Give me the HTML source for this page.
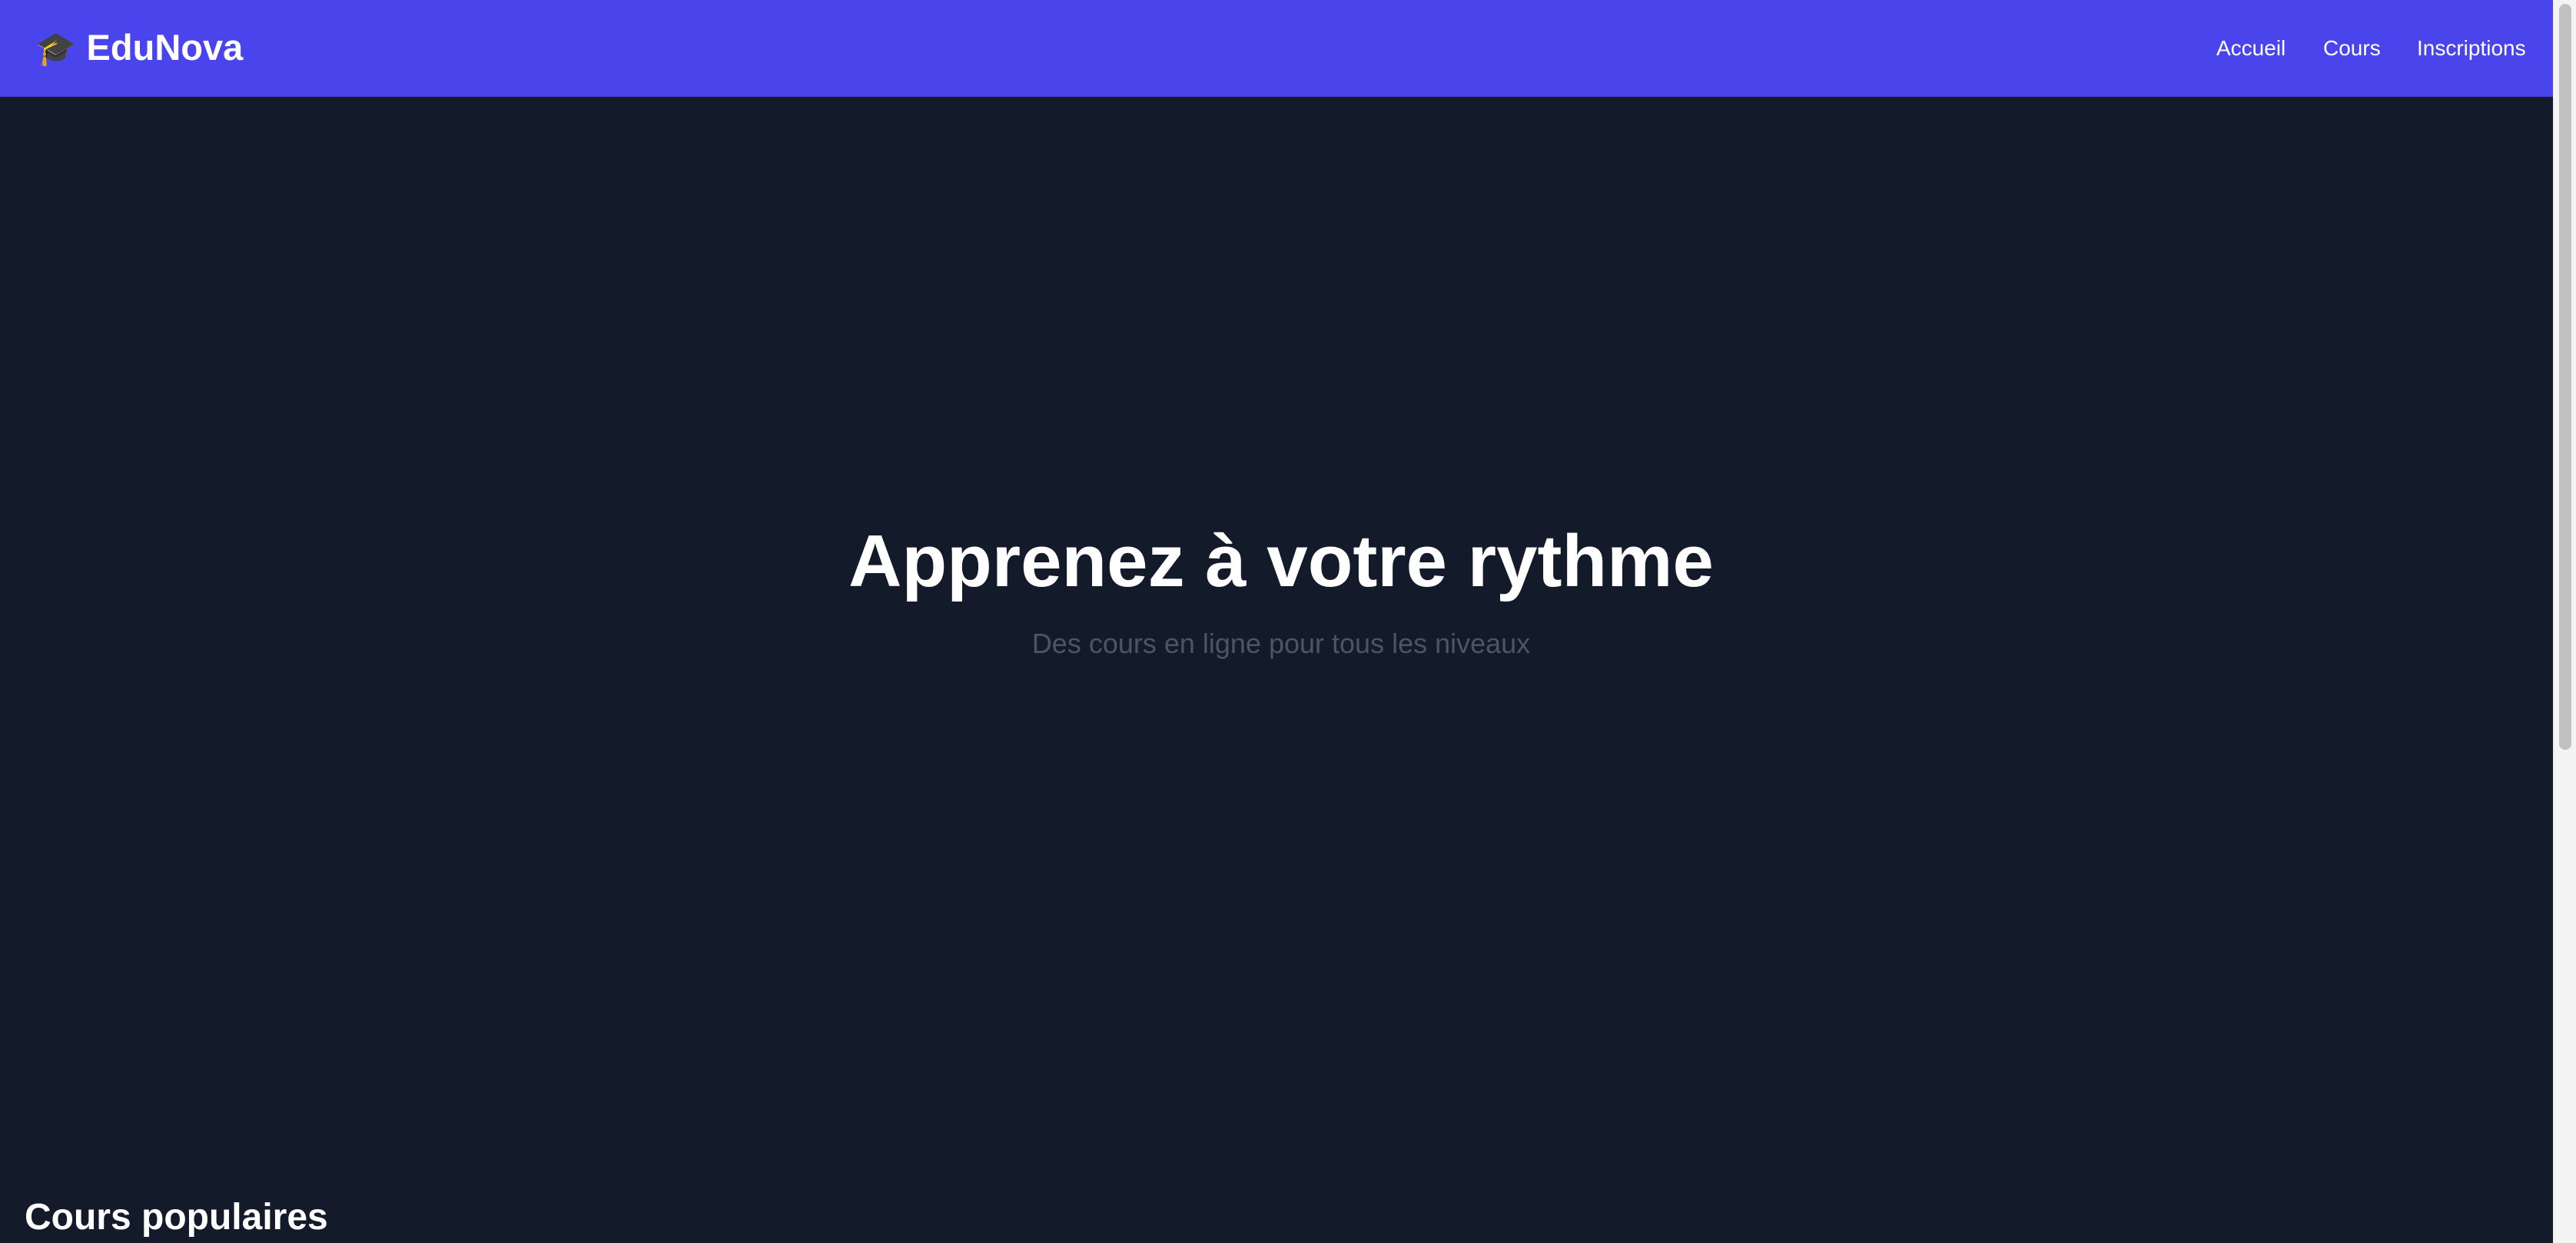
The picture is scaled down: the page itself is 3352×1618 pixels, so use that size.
<!DOCTYPE html>
<html><head><meta charset="utf-8"><style>
html,body{margin:0;padding:0}
body{width:3352px;height:1618px;overflow:hidden;background:#131a2a;font-family:"Liberation Sans",Arial,sans-serif;position:relative}
.hdr{position:absolute;left:0;top:0;width:3322px;height:126px;background:#4a44ed}
.logo{position:absolute;left:46px;top:32px;font-size:47px;font-weight:bold;color:#fff;line-height:60px;white-space:nowrap}
.logo .e{font-family:"Noto Color Emoji","DejaVu Sans",sans-serif;font-size:43px;font-weight:normal;margin-right:13px}
.nav{position:absolute;top:43px;font-size:28px;color:#fff;line-height:40px}
.h1{position:absolute;left:6px;width:3322px;top:676px;text-align:center;font-size:96px;font-weight:bold;color:#fff;line-height:110px;margin:0}
.sub{position:absolute;left:6px;width:3322px;top:818px;text-align:center;font-size:36px;color:#4b5563;line-height:40px}
.h2{position:absolute;left:32px;top:1555px;font-size:48px;font-weight:bold;color:#fff;line-height:60px}
.sb{position:absolute;left:3322px;top:0;width:30px;height:1618px;background:#f4f4f4;border-left:1px solid #e8e8e8;box-sizing:border-box}
.th{position:absolute;left:3330px;top:5px;width:16px;height:971px;background:#c1c1c1;border-radius:8px}
</style></head><body>
<div class="hdr">
<div class="logo"><span class="e">🎓</span>EduNova</div>
<div class="nav" style="left:2884px">Accueil</div>
<div class="nav" style="left:3023px">Cours</div>
<div class="nav" style="left:3145px">Inscriptions</div>
</div>
<div class="h1">Apprenez à votre rythme</div>
<div class="sub">Des cours en ligne pour tous les niveaux</div>
<div class="h2">Cours populaires</div>
<div class="sb"></div><div class="th"></div>
</body></html>
